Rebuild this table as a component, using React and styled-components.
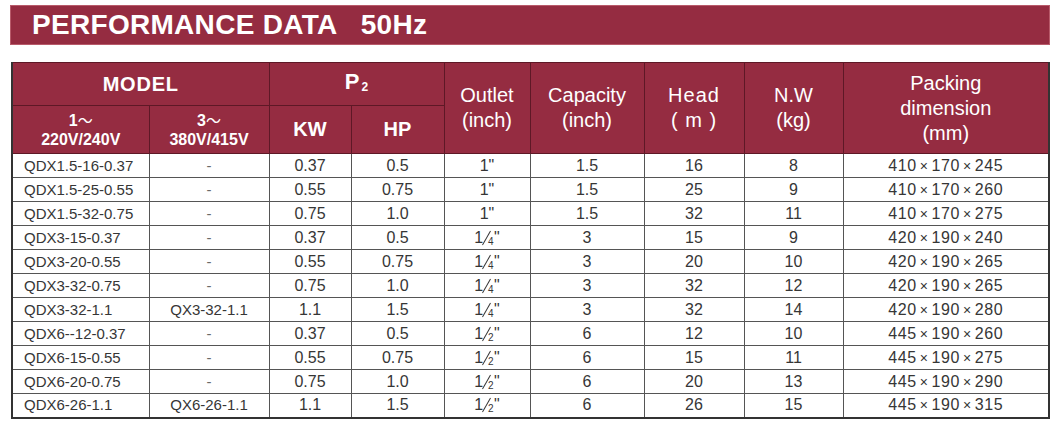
import React from "react";
import styled, { createGlobalStyle } from "styled-components";

const GlobalStyle = createGlobalStyle`
  body {
    margin: 0;
    background: #ffffff;
    font-family: "Liberation Sans", Arial, sans-serif;
  }
`;

const Page = styled.div`
  width: 1058px;
  height: 426px;
  padding: 5px 0 0 10px;
  box-sizing: border-box;
`;

const TitleBar = styled.div`
  width: 1040px;
  height: 40px;
  background: #952c41;
  box-sizing: border-box;
  border: 1px solid #b85a6a;
  display: flex;
  align-items: center;
  padding-left: 21px;
`;

const Title = styled.h1`
  margin: 0;
  font-size: 28px;
  font-weight: 700;
  color: #ffffff;
  white-space: pre;
  letter-spacing: 0.3px;
`;

const Table = styled.table`
  margin: 17px 0 0 1px;
  width: 1037px;
  table-layout: fixed;
  border-collapse: collapse;
  border-left: 2px solid #333;
  border-right: 2px solid #333;
  border-bottom: 2px solid #333;
`;

const HeadCell = styled.th`
  background: #952c41;
  color: #ffffff;
  font-weight: ${(p) => (p.$bold ? 700 : 400)};
  font-size: ${(p) => p.$size || 20}px;
  line-height: ${(p) => p.$lh || 25}px;
  letter-spacing: ${(p) => p.$ls || 0}px;
  height: ${(p) => p.$h || 0}px;
  padding: 0;
  text-align: center;
  vertical-align: middle;
  border: 1px solid #5e1826;
  box-sizing: border-box;
`;

const Sub = styled.span`
  font-size: 12px;
  vertical-align: -2px;
  margin-left: 2px;
`;

const Tilde = styled.span`
  font-family: "Noto Sans CJK SC", sans-serif;
  font-weight: 400;
  font-size: 15px;
`;

const Cell = styled.td`
  height: 24px;
  padding: ${(p) => (p.$left ? "0 0 0 11px" : "0")};
  text-align: ${(p) => (p.$left ? "left" : "center")};
  font-size: ${(p) => p.$size || 16}px;
  letter-spacing: ${(p) => p.$ls || 0}px;
  color: ${(p) => (p.$muted ? "#6a6a6a" : "#363636")};
  border: 1px solid #555;
  white-space: nowrap;
  box-sizing: border-box;
  line-height: 22px;
`;

const Frac = styled.span`
  display: inline-block;
  position: relative;
  width: 11px;
  height: 17px;
  vertical-align: -4px;
`;

const Slash = styled.span`
  position: absolute;
  left: 3px;
  top: 0;
  width: 1px;
  height: 16px;
  background: #363636;
  transform: rotate(30deg);
`;

const Den = styled.span`
  position: absolute;
  left: 5px;
  top: 6px;
  font-size: 10px;
  line-height: 12px;
`;

const Times = styled.span`
  font-size: 14px;
  margin: 0 3px;
`;

const widths = [137, 120, 82, 93, 86, 114, 100, 99, 206];

const rows = [
  ["QDX1.5-16-0.37", "-", "0.37", "0.5", "1", "1.5", "16", "8", "410×170×245"],
  ["QDX1.5-25-0.55", "-", "0.55", "0.75", "1", "1.5", "25", "9", "410×170×260"],
  ["QDX1.5-32-0.75", "-", "0.75", "1.0", "1", "1.5", "32", "11", "410×170×275"],
  ["QDX3-15-0.37", "-", "0.37", "0.5", "4", "3", "15", "9", "420×190×240"],
  ["QDX3-20-0.55", "-", "0.55", "0.75", "4", "3", "20", "10", "420×190×265"],
  ["QDX3-32-0.75", "-", "0.75", "1.0", "4", "3", "32", "12", "420×190×265"],
  ["QDX3-32-1.1", "QX3-32-1.1", "1.1", "1.5", "4", "3", "32", "14", "420×190×280"],
  ["QDX6--12-0.37", "-", "0.37", "0.5", "2", "6", "12", "10", "445×190×260"],
  ["QDX6-15-0.55", "-", "0.55", "0.75", "2", "6", "15", "11", "445×190×275"],
  ["QDX6-20-0.75", "-", "0.75", "1.0", "2", "6", "20", "13", "445×190×290"],
  ["QDX6-26-1.1", "QX6-26-1.1", "1.1", "1.5", "2", "6", "26", "15", "445×190×315"],
];

const Outlet = ({ den }) =>
  den === "1" ? (
    <>1"</>
  ) : (
    <>
      1
      <Frac>
        <Slash />
        <Den>{den}</Den>
      </Frac>
      "
    </>
  );

const Packing = ({ value }) => {
  const parts = value.split("×");
  return (
    <>
      {parts[0]}
      <Times>×</Times>
      {parts[1]}
      <Times>×</Times>
      {parts[2]}
    </>
  );
};

const App = () => {
  return (
    <Page>
      <GlobalStyle />
      <TitleBar>
        <Title>{"PERFORMANCE DATA   50Hz"}</Title>
      </TitleBar>
      <Table>
        <colgroup>
          {widths.map((w, i) => (
            <col key={i} style={{ width: w }} />
          ))}
        </colgroup>
        <thead>
          <tr>
            <HeadCell colSpan={2} $bold $size={20} $h={43} $ls={0.8}>
              MODEL
            </HeadCell>
            <HeadCell colSpan={2} $bold $size={22} $h={43}>
              P<Sub>2</Sub>
            </HeadCell>
            <HeadCell rowSpan={2}>
              Outlet
              <br />
              (inch)
            </HeadCell>
            <HeadCell rowSpan={2}>
              Capacity
              <br />
              (inch)
            </HeadCell>
            <HeadCell rowSpan={2} $ls={1}>
              Head
              <br />( m )
            </HeadCell>
            <HeadCell rowSpan={2}>
              N.W
              <br />
              (kg)
            </HeadCell>
            <HeadCell rowSpan={2}>
              Packing
              <br />
              dimension
              <br />
              (mm)
            </HeadCell>
          </tr>
          <tr>
            <HeadCell $bold $size={16} $lh={19} $h={48}>
              1<Tilde>～</Tilde>
              <br />
              220V/240V
            </HeadCell>
            <HeadCell $bold $size={16} $lh={19} $h={48}>
              3<Tilde>～</Tilde>
              <br />
              380V/415V
            </HeadCell>
            <HeadCell $bold $size={20} $h={48}>
              KW
            </HeadCell>
            <HeadCell $bold $size={20} $h={48}>
              HP
            </HeadCell>
          </tr>
        </thead>
        <tbody>
          {rows.map((r) => (
            <tr key={r[0]}>
              <Cell $left $size={15}>{r[0]}</Cell>
              <Cell $size={15} $muted={r[1] === "-"}>{r[1]}</Cell>
              <Cell>{r[2]}</Cell>
              <Cell>{r[3]}</Cell>
              <Cell>
                <Outlet den={r[4]} />
              </Cell>
              <Cell>{r[5]}</Cell>
              <Cell>{r[6]}</Cell>
              <Cell>{r[7]}</Cell>
              <Cell $ls={0.6}>
                <Packing value={r[8]} />
              </Cell>
            </tr>
          ))}
        </tbody>
      </Table>
    </Page>
  );
};

export default App;
